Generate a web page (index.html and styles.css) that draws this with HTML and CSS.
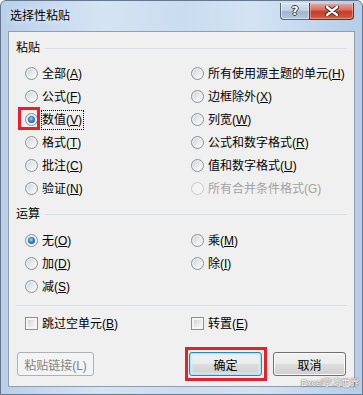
FILE: index.html
```html
<!DOCTYPE html>
<html lang="zh-CN">
<head>
<meta charset="utf-8">
<title>选择性粘贴</title>
<link rel="stylesheet" href="styles.css">
</head>
<body>
<div class="window">
  <div class="titlebar">
    <span class="title">选择性粘贴</span>
    <div class="caption-btns">
      <div class="cbtn help"><span class="qmark">?</span></div>
      <div class="cbtn close">
        <svg width="14" height="10" viewBox="0 0 14 10">
          <path d="M2 1 L12 9 M12 1 L2 9" stroke="#3b2624" stroke-width="4.2" stroke-linecap="round"/>
          <path d="M2 1 L12 9 M12 1 L2 9" stroke="#ffffff" stroke-width="2.4" stroke-linecap="round"/>
        </svg>
      </div>
    </div>
  </div>
  <div class="client">
    <div class="group-head first"><span>粘贴</span><i class="rule"></i></div>
    <div class="opts paste">
      <div class="opt"><span class="radio"></span><span class="lbl">全部(<u>A</u>)</span></div>
      <div class="opt"><span class="radio"></span><span class="lbl">所有使用源主题的单元(<u>H</u>)</span></div>
      <div class="opt"><span class="radio"></span><span class="lbl">公式(<u>F</u>)</span></div>
      <div class="opt"><span class="radio"></span><span class="lbl">边框除外(<u>X</u>)</span></div>
      <div class="opt"><span class="radio checked marked"></span><span class="lbl focus">数值(<u>V</u>)</span></div>
      <div class="opt"><span class="radio"></span><span class="lbl">列宽(<u>W</u>)</span></div>
      <div class="opt"><span class="radio"></span><span class="lbl">格式(<u>T</u>)</span></div>
      <div class="opt"><span class="radio"></span><span class="lbl">公式和数字格式(<u>R</u>)</span></div>
      <div class="opt"><span class="radio"></span><span class="lbl">批注(<u>C</u>)</span></div>
      <div class="opt"><span class="radio"></span><span class="lbl">值和数字格式(<u>U</u>)</span></div>
      <div class="opt"><span class="radio"></span><span class="lbl">验证(<u>N</u>)</span></div>
      <div class="opt disabled"><span class="radio"></span><span class="lbl">所有合并条件格式(G)</span></div>
    </div>
    <div class="group-head second"><span>运算</span><i class="rule"></i></div>
    <div class="opts ops">
      <div class="opt"><span class="radio checked"></span><span class="lbl">无(<u>O</u>)</span></div>
      <div class="opt"><span class="radio"></span><span class="lbl">乘(<u>M</u>)</span></div>
      <div class="opt"><span class="radio"></span><span class="lbl">加(<u>D</u>)</span></div>
      <div class="opt"><span class="radio"></span><span class="lbl">除(<u>I</u>)</span></div>
      <div class="opt"><span class="radio"></span><span class="lbl">减(<u>S</u>)</span></div>
    </div>
    <div class="separator"></div>
    <div class="opts checks">
      <div class="opt"><span class="check"></span><span class="lbl">跳过空单元(<u>B</u>)</span></div>
      <div class="opt"><span class="check"></span><span class="lbl">转置(<u>E</u>)</span></div>
    </div>
    <div class="buttons">
      <button class="btn wide" disabled>粘贴链接(L)</button>
      <div class="ok-wrap"><button class="btn default">确定</button></div>
      <button class="btn">取消</button>
    </div>
  </div>
  <div class="watermark">Excel学习世界</div>
</div>
</body>
</html>
```

FILE: styles.css
```css
html, body {
  margin: 0;
  padding: 0;
}
body {
  width: 363px;
  height: 395px;
  overflow: hidden;
  font-family: "Liberation Sans", "Noto Sans CJK SC", sans-serif;
  font-size: 12px;
  color: #000;
}
.window {
  position: relative;
  width: 363px;
  height: 395px;
  box-sizing: border-box;
  border: 1px solid #66788d;
  border-radius: 6px 6px 0 0;
  background: linear-gradient(90deg, #b9d0ea 0%, #d5e4f4 28%, #cadcf0 50%, #d3e3f4 70%, #b6cde8 100%);
  display: flex;
  flex-direction: column;
}
.titlebar {
  height: 30px;
  display: flex;
  justify-content: space-between;
  align-items: flex-start;
  padding: 0 8px 0 9px;
  flex-shrink: 0;
}
.title {
  line-height: 30px;
  font-size: 12px;
  color: #000;
  text-shadow: 0 0 6px rgba(255,255,255,0.9);
}
.caption-btns {
  display: flex;
  margin-top: 2px;
}
.cbtn {
  height: 17px;
  box-sizing: border-box;
  border: 1px solid #5a6a7e;
  border-top: none;
  display: flex;
  align-items: center;
  justify-content: center;
}
.help {
  width: 29px;
  border-right: none;
  border-radius: 0 0 0 4px;
  background: linear-gradient(#d6e3f1 0%, #c2d3e6 45%, #9fb5cd 55%, #b5c9de 100%);
  box-shadow: inset 0 0 0 1px rgba(255,255,255,0.45);
}
.qmark {
  font-family: "DejaVu Sans", sans-serif;
  font-weight: bold;
  font-size: 12px;
  line-height: 14px;
  color: #fff;
  text-shadow: 1px 0 0 #34404e, -1px 0 0 #34404e, 0 1px 0 #34404e, 0 -1px 0 #34404e;
}
.close {
  width: 45px;
  border-radius: 0 0 4px 0;
  border-color: #5b2f2a;
  background: linear-gradient(#e9a999 0%, #d8735f 40%, #c63b26 55%, #d55c44 100%);
  box-shadow: inset 0 0 0 1px rgba(255,220,210,0.45);
}
.close svg {
  display: block;
}
.client {
  margin: 0 7px;
  height: 356px;
  box-sizing: border-box;
  border: 1px solid #8f9fb2;
  background: #f0f0f0;
  display: flex;
  flex-direction: column;
  flex-shrink: 0;
}
.group-head {
  display: flex;
  align-items: center;
  height: 16px;
  line-height: 16px;
  padding-left: 7px;
  gap: 5px;
  margin-right: 7px;
}
.group-head.first { margin-top: 8px; }
.group-head.second { margin-top: 6px; }
.rule {
  flex: 1;
  height: 1px;
  background: #d5dde6;
}
.opts {
  display: grid;
  grid-template-columns: 166px 1fr;
  grid-auto-rows: 23px;
  padding-left: 16px;
}
.paste { margin-top: 6px; }
.ops { margin-top: 7px; }
.checks { margin-top: 6px; }
.opt {
  display: flex;
  align-items: center;
  gap: 4px;
  white-space: nowrap;
}
.lbl {
  line-height: 18px;
}
.lbl u {
  text-decoration: underline;
  text-underline-offset: 1px;
}
.lbl.focus {
  outline: 1px dotted #000;
  outline-offset: 0;
  padding: 0 1px 0 0;
}
.radio {
  position: relative;
  width: 13px;
  height: 13px;
  box-sizing: border-box;
  border-radius: 50%;
  border: 1px solid #8c8e91;
  background: linear-gradient(135deg, #c9ccd0 0%, #e8e9ea 50%, #ffffff 100%);
  box-shadow: inset 0 0 0 1px #f6f6f6;
  flex-shrink: 0;
}
.radio.checked::after {
  content: "";
  position: absolute;
  left: 2px;
  top: 2px;
  width: 7px;
  height: 7px;
  border-radius: 50%;
  background: radial-gradient(circle at 45% 40%, #9fdcff 0%, #2c86c9 45%, #0f4275 100%);
}
.radio.marked::before {
  content: "";
  position: absolute;
  left: -8px;
  top: -7px;
  width: 22px;
  height: 23px;
  box-sizing: border-box;
  border: 3px solid #e8202a;
}
.disabled .lbl { color: #a2a2a2; }
.disabled .radio {
  border-color: #c8c9ca;
  background: #f4f4f4;
  box-shadow: none;
}
.separator {
  height: 1px;
  background: #d5dde6;
  margin: 7px 7px 0 7px;
}
.check {
  width: 13px;
  height: 13px;
  box-sizing: border-box;
  border: 1px solid #8e8f8f;
  background: linear-gradient(135deg, #cbcbcb 0%, #ececec 60%, #f7f7f7 100%);
  box-shadow: inset 0 0 0 2px #f4f4f4;
  flex-shrink: 0;
}
.buttons {
  display: flex;
  align-items: center;
  margin-top: 17px;
  padding: 0 8px;
}
.btn {
  height: 24px;
  width: 73px;
  box-sizing: border-box;
  border: 1px solid #707070;
  border-radius: 3px;
  background: linear-gradient(#f2f2f2 0%, #ebebeb 50%, #dddddd 51%, #cfcfcf 100%);
  box-shadow: inset 0 0 0 1px #fbfbfb;
  font-family: "Liberation Sans", "Noto Sans CJK SC", sans-serif;
  font-size: 12px;
  color: #000;
  padding: 0;
}
.btn.wide {
  width: 77px;
}
.btn[disabled] {
  border-color: #adb2b5;
  background: #f4f4f4;
  box-shadow: none;
  color: #838383;
}
.ok-wrap {
  position: relative;
  margin-left: auto;
  margin-right: 11px;
  display: flex;
}
.ok-wrap::after {
  content: "";
  position: absolute;
  left: -4px;
  top: -5px;
  right: -5px;
  bottom: -5px;
  border: 3px solid #e8202a;
}
.btn.default {
  border-color: #3c7fb1;
  box-shadow: inset 0 0 0 1px #a8e3f7, inset 0 0 2px 2px #d2f0fb;
}
.watermark {
  position: absolute;
  right: 3px;
  bottom: 6px;
  font-size: 9px;
  line-height: 10px;
  color: #fff;
  text-shadow: 0 0 1px #555, 0 0 2px #777;
  letter-spacing: 0;
}
```
